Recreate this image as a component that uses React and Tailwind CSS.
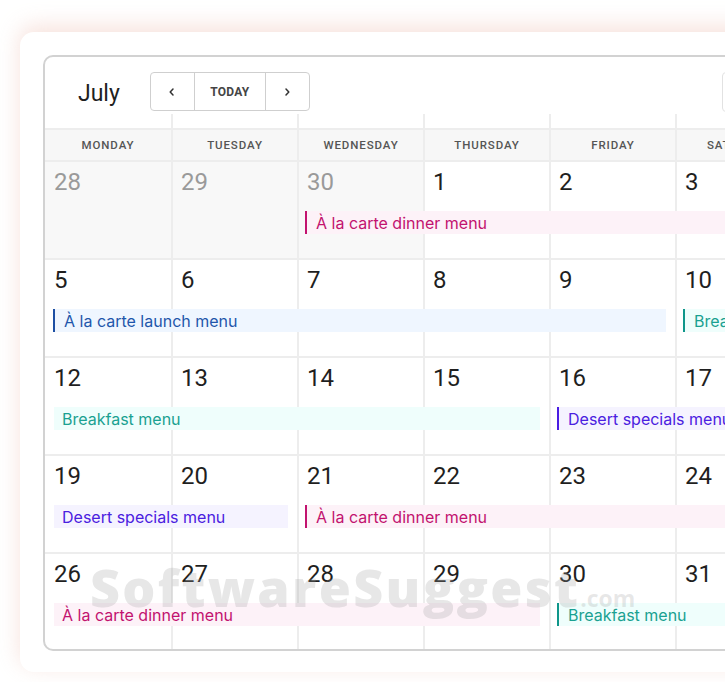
import React from 'react'

const COL_START = ['', 'col-start-1', 'col-start-2', 'col-start-3', 'col-start-4', 'col-start-5', 'col-start-6', 'col-start-7']
const COL_SPAN = ['', 'col-span-1', 'col-span-2', 'col-span-3', 'col-span-4', 'col-span-5', 'col-span-6', 'col-span-7']

const TONES = {
    pink: { bar: 'bg-[#fdf2f8] text-[#c2136f]', edge: 'border-[#c2136f]' },
    blue: { bar: 'bg-[#eff6ff] text-[#1f56ab]', edge: 'border-[#1d4fa3]' },
    teal: { bar: 'bg-[#effefc] text-[#1aa191]', edge: 'border-[#0f968a]' },
    violet: { bar: 'bg-[#f5f3ff] text-[#4a20e0]', edge: 'border-[#4a1de3]' },
}

const DAYS = ['Monday', 'Tuesday', 'Wednesday', 'Thursday', 'Friday', 'Saturday', 'Sunday']

const weeks = [
    {
        dates: [[28, true], [29, true], [30, true], [1], [2], [3], [4]],
        events: [{ start: 3, span: 5, label: 'À la carte dinner menu', tone: 'pink', first: true }],
    },
    {
        dates: [[5], [6], [7], [8], [9], [10], [11]],
        events: [
            { start: 1, span: 5, label: 'À la carte launch menu', tone: 'blue', first: true },
            { start: 6, span: 2, label: 'Breakfast menu', tone: 'teal', first: true },
        ],
    },
    {
        dates: [[12], [13], [14], [15], [16], [17], [18]],
        events: [
            { start: 1, span: 4, label: 'Breakfast menu', tone: 'teal' },
            { start: 5, span: 3, label: 'Desert specials menu', tone: 'violet', first: true },
        ],
    },
    {
        dates: [[19], [20], [21], [22], [23], [24], [25]],
        events: [
            { start: 1, span: 2, label: 'Desert specials menu', tone: 'violet' },
            { start: 3, span: 5, label: 'À la carte dinner menu', tone: 'pink', first: true },
        ],
    },
    {
        dates: [[26], [27], [28], [29], [30], [31], [1, true]],
        events: [
            { start: 1, span: 4, label: 'À la carte dinner menu', tone: 'pink' },
            { start: 5, span: 3, label: 'Breakfast menu', tone: 'teal', first: true },
        ],
    },
]

const grid = 'grid grid-cols-[126px_126px_126px_126px_126px_126px_126px]'

function Chevron({ dir }) {
    return (
        <svg width="10" height="10" viewBox="0 0 10 10" fill="none" stroke="#333" strokeWidth="1.5" strokeLinecap="round" strokeLinejoin="round">
            {dir === 'left' ? <path d="M6 2 L3.2 5 L6 8" /> : <path d="M4 2 L6.8 5 L4 8" />}
        </svg>
    )
}

function Event({ ev }) {
    const tone = TONES[ev.tone]
    return (
        <div
            className={`row-start-1 ${COL_START[ev.start]} ${COL_SPAN[ev.span]} self-start mt-[49px] h-[23px] flex items-center text-[16px] leading-none whitespace-nowrap overflow-hidden z-10
                ${tone.bar}
                ${ev.first ? `border-l-2 ${tone.edge} ml-[8px] pl-[9px]` : 'ml-[9px] pl-[8px]'}
                ${ev.start + ev.span - 1 < 7 ? 'mr-[9px]' : ''}`}
            style={{ fontFamily: 'Inter, "Liberation Sans", sans-serif' }}
        >
            {ev.label}
        </div>
    )
}

function Week({ week, last }) {
    return (
        <div className={`${grid} h-[98px] ${last ? '' : 'border-b-2 border-[#ededed]'}`}>
            {week.dates.map(([d, muted], i) => (
                <div
                    key={i}
                    className={`row-start-1 ${COL_START[i + 1]} ${i > 0 ? 'border-l-2 border-[#ededed] pl-2' : 'pl-[9px]'} pt-[6px]
                        ${muted ? 'bg-[#f8f8f8] text-[#9a9a9a]' : 'text-[#1f1f1f]'} text-[24px] leading-[28px]`}
                >
                    {d}
                </div>
            ))}
            {week.events.map((ev, i) => <Event key={i} ev={ev} />)}
        </div>
    )
}

export default function App() {
    return (
        <div className="relative w-[725px] h-[682px] overflow-hidden bg-white" style={{ fontFamily: 'Roboto, "Liberation Sans", sans-serif' }}>
            <div className="absolute left-[20px] top-[32px] w-[1000px] h-[640px] rounded-[14px] bg-white shadow-[0_-6px_22px_rgba(238,190,178,0.45)] pt-[23px] pl-[23px]">
                <div className="w-[940px] h-[596px] border-2 border-[#d2d2d2] rounded-[10px] overflow-hidden">
                    {/* toolbar */}
                    <div className="h-[57px] flex items-start pt-[15px]">
                        <div className="ml-[33px] mt-[5px] text-[23px] text-[#1f1f1f]">July</div>
                        <div className="ml-[30px] flex h-[39px] border border-[#cfcfcf] rounded-[4px]">
                            <div className="w-[43px] flex items-center justify-center"><Chevron dir="left" /></div>
                            <div className="w-[71px] flex items-center justify-center border-l border-[#cfcfcf] text-[12px] font-bold tracking-[0.3px] text-[#444]">TODAY</div>
                            <div className="w-[44px] flex items-center justify-center border-l border-[#cfcfcf]"><Chevron dir="right" /></div>
                        </div>
                        <div className="ml-[412px] h-[40px] w-[80px] border border-[#e2e2e2] rounded-[4px]" />
                    </div>

                    {/* column line spacer */}
                    <div className={`${grid} h-[14px]`}>
                        {DAYS.map((d, i) => (
                            <div key={d} className={i > 0 ? 'border-l-2 border-[#ededed]' : ''} />
                        ))}
                    </div>

                    {/* day names */}
                    <div className={`${grid} h-[34px] bg-[#f7f7f7] border-y-2 border-[#ededed]`}>
                        {DAYS.map((d, i) => (
                            <div
                                key={d}
                                className={`flex items-center justify-center pt-[1px] text-[11.5px] font-medium tracking-[0.9px] uppercase text-[#555] ${i > 0 ? 'border-l-2 border-[#ededed]' : ''}`}
                            >
                                {d}
                            </div>
                        ))}
                    </div>

                    {weeks.map((w, i) => <Week key={i} week={w} last={i === weeks.length - 1} />)}
                </div>
            </div>

            {/* watermark */}
            <div
                className="absolute left-[90px] top-[548px] flex items-baseline text-[#a0a0a0]/25 pointer-events-none z-20"
                style={{ fontFamily: '"Open Sans", "DejaVu Sans", sans-serif' }}
            >
                <span className="text-[52px] font-extrabold tracking-[2.3px]">SoftwareSuggest</span>
                <span className="text-[23px] font-bold">.com</span>
            </div>
        </div>
    )
}
